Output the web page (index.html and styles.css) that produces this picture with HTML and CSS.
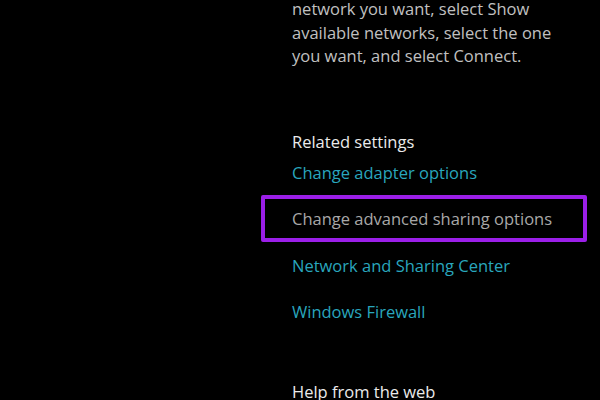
FILE: index.html
```html
<!DOCTYPE html>
<html lang="en">
<head>
<meta charset="utf-8">
<title>Network settings</title>
<link rel="stylesheet" href="styles.css">
</head>
<body>
<main class="panel">
  <p class="intro">network you want, select Show<br>available networks, select the one<br>you want, and select Connect.</p>
  <section class="related">
    <h2 class="heading">Related settings</h2>
    <ul class="links">
      <li class="link-item"><a class="link">Change adapter options</a></li>
      <li class="link-item selected"><a class="link">Change advanced sharing options</a></li>
      <li class="link-item"><a class="link">Network and Sharing Center</a></li>
      <li class="link-item"><a class="link">Windows Firewall</a></li>
    </ul>
  </section>
  <section class="help">
    <h2 class="heading">Help from the web</h2>
  </section>
</main>
</body>
</html>
```

FILE: styles.css
```css
html, body {
  margin: 0;
  padding: 0;
  background: #000;
  height: 100%;
  overflow: hidden;
}

.panel {
  padding-left: 292px;
  font-family: "Open Sans", "Noto Sans", sans-serif;
  font-size: 16.5px;
}

.intro {
  margin: -3px 0 0 0;
  line-height: 23.5px;
  color: #c0c0c0;
}

.related {
  margin-top: 62px;
}

.heading {
  margin: 0;
  font-size: 16.5px;
  font-weight: 400;
  line-height: 23px;
  color: #ebebeb;
}

.links {
  list-style: none;
  margin: 8px 0 0 0;
  padding: 0;
  display: flex;
  flex-direction: column;
  gap: 23.5px;
}

.link-item {
  line-height: 23px;
}

.link {
  color: #29a6bd;
  text-decoration: none;
}

.selected {
  position: relative;
}

.selected .link {
  color: #a8a8a8;
}

.selected::before {
  content: "";
  position: absolute;
  left: -31px;
  right: 13px;
  top: -12px;
  bottom: -12px;
  border: 4px solid #9b1fe8;
  border-radius: 2px;
}

.help {
  margin-top: 57px;
}
```
